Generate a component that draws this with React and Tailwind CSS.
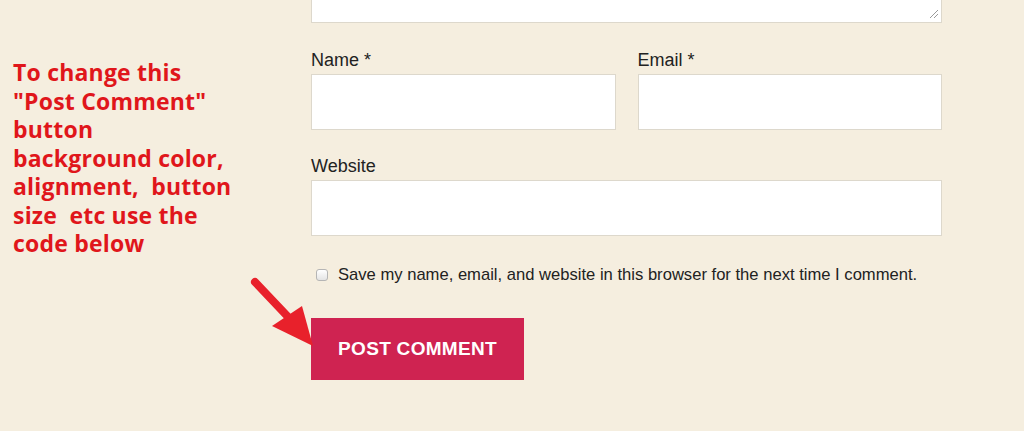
import React from 'react';

function ResizeGrip() {
  return (
    <svg width="10" height="10" viewBox="0 0 10 10" className="absolute right-[2px] bottom-[3px]">
      <line x1="1" y1="9" x2="9" y2="1" stroke="#9a9a9a" strokeWidth="1" />
      <line x1="5" y1="9" x2="9" y2="5" stroke="#9a9a9a" strokeWidth="1" />
    </svg>
  );
}

function Arrow() {
  return (
    <svg
      width="80"
      height="90"
      viewBox="0 0 80 90"
      className="absolute left-[245px] top-[268px] pointer-events-none"
    >
      <line x1="10" y1="14" x2="46" y2="52" stroke="#e8212b" strokeWidth="8" strokeLinecap="round" />
      <polygon points="27,58 57,38 68,78" fill="#e8212b" />
    </svg>
  );
}

const lines = ['To change this', '"Post Comment"', 'button', 'background color,', 'alignment,\u00a0 button', 'size\u00a0 etc use the', 'code below'];

export default function App() {
  return (
    <div
      className="relative w-[1024px] h-[431px] overflow-hidden bg-[#f5eedf]"
      style={{ fontFamily: '"Liberation Sans", Arial, sans-serif' }}
    >
      <div className="flex">
        <div className="w-[311px] shrink-0 pl-[13px] pt-[58px]">
          <p
            className="text-[#e0161b] font-bold text-[23px] leading-[28.5px] tracking-[0.2px]"
            style={{ fontFamily: '"Open Sans", sans-serif' }}
          >
            {lines.map((l) => (
              <span key={l} className="block whitespace-nowrap">{l}</span>
            ))}
          </p>
        </div>

        <div className="w-[631px] shrink-0">
          <div className="relative h-[23px] bg-white border-x border-b border-[#ddd8cc]">
            <ResizeGrip />
          </div>

          <div className="grid grid-cols-2 gap-x-[22px] mt-[25px]">
            <div>
              <div className="text-[18px] leading-[24px] text-[#222] mb-[2px]">Name *</div>
              <div className="h-[56px] bg-white border border-[#ddd8cc]" />
            </div>
            <div>
              <div className="text-[18px] leading-[24px] text-[#222] mb-[2px]">Email *</div>
              <div className="h-[56px] bg-white border border-[#ddd8cc]" />
            </div>
          </div>

          <div className="mt-[24px]">
            <div className="text-[18px] leading-[24px] text-[#222] mb-[2px]">Website</div>
            <div className="h-[56px] bg-white border border-[#ddd8cc]" />
          </div>

          <div className="mt-[27px] flex items-center h-[24px]">
            <span className="ml-[5px] w-[12px] h-[12px] rounded-[3px] border border-[#b5b5b5] bg-gradient-to-b from-white to-[#e4e4e4]" />
            <span className="ml-[10px] text-[16.6px] text-[#222] whitespace-nowrap">
              Save my name, email, and website in this browser for the next time I comment.
            </span>
          </div>

          <button className="mt-[31px] w-[213px] h-[62px] bg-[#cf2351] text-white text-[19px] font-bold tracking-[0.3px]">
            POST COMMENT
          </button>
        </div>
      </div>

      <Arrow />
    </div>
  );
}
